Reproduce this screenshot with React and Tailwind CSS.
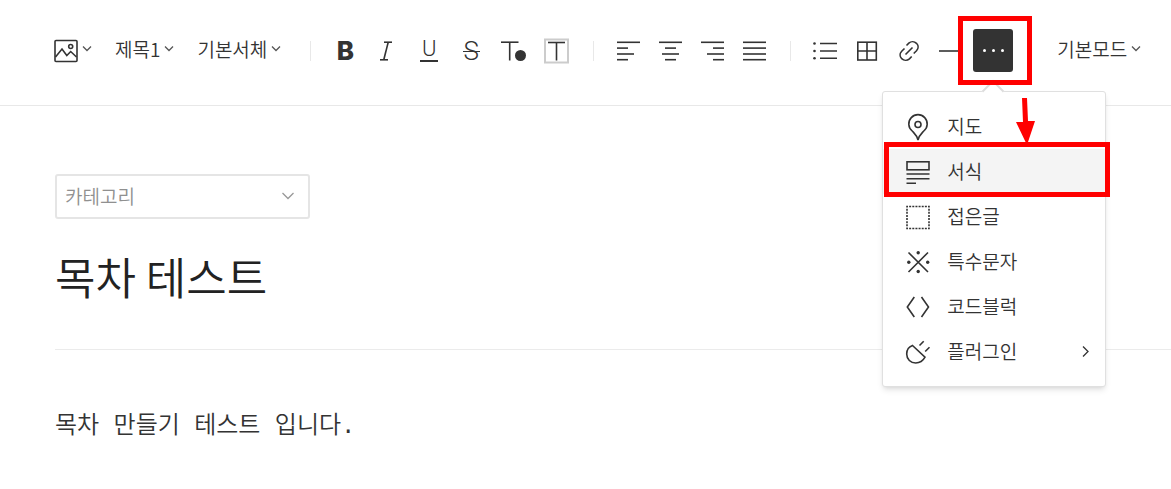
import { useState } from "react";

const strokeProps = {
  fill: "none",
  stroke: "#333",
  strokeWidth: 1.6,
};

function Icon({ children }) {
  return (
    <svg className="w-7 h-7 shrink-0" viewBox="0 0 28 28" aria-hidden="true" {...strokeProps}>
      {children}
    </svg>
  );
}

function Chevron() {
  return (
    <svg className="w-[10px] h-[6px] shrink-0 mb-1" viewBox="0 0 10 6" fill="none" stroke="#555" strokeWidth="1.3" aria-hidden="true">
      <path d="M1 .5l4 4 4-4" />
    </svg>
  );
}

function ToolButton({ label, children }) {
  return (
    <button aria-label={label} className="w-10 h-[43px] mx-px flex items-center justify-center text-[#333]">
      {children}
    </button>
  );
}

function TextDropdown({ children }) {
  return (
    <button className="h-[43px] flex items-center gap-1 text-[19px] whitespace-nowrap text-[#333]">
      <span className="pb-[2px]">{children}</span>
      <Chevron />
    </button>
  );
}

function Divider() {
  return <span className="w-px h-5 bg-[#e8e8e8] shrink-0" />;
}

// 정렬 아이콘: 각 줄의 [x1, x2]
const aligns = [
  { label: "왼쪽 정렬", rows: [[2, 25], [2, 13], [2, 19], [2, 13]] },
  { label: "가운데 정렬", rows: [[2, 25], [8, 19], [5, 22], [8, 19]] },
  { label: "오른쪽 정렬", rows: [[2, 25], [14, 25], [8, 25], [14, 25]] },
  { label: "양쪽 정렬", rows: [[2, 25], [2, 25], [2, 25], [2, 25]] },
];
const alignY = [5.3, 11.1, 17, 22.7];

const menuItems = [
  {
    name: "지도",
    icon: (
      <>
        <path d="M14 27c-1-4.500-3.200-6.200-5.800-9A9.200 9.200 0 1 1 19.800 18c-2.600 2.800-4.800 4.500-5.800 9z" />
        <circle cx="14" cy="11.500" r="3" />
      </>
    ),
  },
  {
    name: "서식",
    icon: (
      <>
        <rect x="3" y="3.800" width="22" height="8" />
        <path d="M2.500 16h23M2.500 20.700h23M2.500 25.200h9.500" />
      </>
    ),
  },
  {
    name: "접은글",
    icon: <rect x="3" y="3.500" width="22" height="22" strokeDasharray="2 1.143" strokeDashoffset="1" />,
  },
  {
    name: "특수문자",
    icon: (
      <>
        <path d="M4.500 4.500L24 24M24 4.500L4.500 24" />
        <g fill="#333" stroke="none">
          <circle cx="14.200" cy="4.800" r="1.700" />
          <circle cx="14.200" cy="23.500" r="1.700" />
          <circle cx="4.800" cy="14.200" r="1.700" />
          <circle cx="23.700" cy="14.200" r="1.700" />
        </g>
      </>
    ),
  },
  {
    name: "코드블럭",
    icon: <path d="M10.300 4L3.300 14l7 10M17.500 4l7 10-7 10" />,
  },
  {
    name: "플러그인",
    more: true,
    icon: (
      <>
        <path d="M8.500 7.500L21 19.200c-2.200 4-5.500 5.800-9.300 5.800-5 0-9-3.800-9-9 0-3.700 2.300-7.300 5.800-8.500z" />
        <path d="M15.500 7.500l4.200-4.200M21.200 13.500l4.300-4.300" />
      </>
    ),
  },
];

function MoreMenu() {
  return (
    <div className="absolute z-10 top-[62px] -left-[91px] w-[224px] bg-white border border-[#e0e0e0] rounded-[3px] shadow-md py-3">
      {/* 말풍선 꼬리 */}
      <span className="absolute -top-[9px] left-[102px] w-4 h-4 bg-white border-t-2 border-l-2 border-[#ddd] rotate-45" />
      <ul>
        {menuItems.map((item) => (
          <li key={item.name} className="relative">
            <button
              className={`w-full h-[45px] pl-[21px] pr-4 flex items-center gap-[15px] text-[19px] text-[#333] ${
                item.name === "서식" ? "bg-[#f4f4f4]" : "bg-white"
              }`}
            >
              <Icon>{item.icon}</Icon>
              <span>{item.name}</span>
              {item.more && (
                <svg className="ml-auto w-[7px] h-3" viewBox="0 0 7 12" {...strokeProps} strokeWidth="1.3" aria-hidden="true">
                  <path d="M1 .5l5 5-5 5" />
                </svg>
              )}
            </button>
            {item.name === "서식" && (
              <span className="absolute z-10 -top-[7px] -bottom-[3px] left-px -right-[5px] border-5 border-[#f00] pointer-events-none" />
            )}
          </li>
        ))}
      </ul>
      {/* 빨간 화살표 */}
      <svg className="absolute top-[6px] left-[133px] w-5 h-12" viewBox="0 0 20 48" fill="#f00" aria-hidden="true">
        <path d="M6 0h5l1 23h7L11 47 0 24h7z" />
      </svg>
    </div>
  );
}

export default function App() {
  const [category, setCategory] = useState("");
  const [title, setTitle] = useState("목차 테스트");
  const [content, setContent] = useState("목차 만들기 테스트 입니다.");

  return (
    <div className="bg-white text-[#222] font-['Noto_Sans_CJK_KR',sans-serif] font-[350]">
      {/* TOOLBAR */}
      <header className="flex items-center pt-[29px] pb-[33px] pl-[54px] border-b border-[#e8e8e8]">
        <div className="flex items-center gap-[23px]">
          <button aria-label="사진" className="h-[43px] flex items-center gap-1">
            <svg className="w-6 h-6" viewBox="0 0 24 24" {...strokeProps} aria-hidden="true">
              <rect x="1" y="1.500" width="22" height="21" rx="1" />
              <circle cx="16.700" cy="7.500" r="2" />
              <path d="M1.500 18L8 10l4.800 6.500 3.900-4L22.500 18" />
            </svg>
            <Chevron />
          </button>
          <TextDropdown>제목1</TextDropdown>
          <TextDropdown>기본서체</TextDropdown>
        </div>

        <div className="flex items-center ml-[29px]">
          <Divider />
        </div>

        <div className="flex ml-[13px] mr-[17px]">
          <ToolButton label="굵게">
            <span className="font-['Inter'] font-extrabold text-[26px] leading-none">B</span>
          </ToolButton>
          <ToolButton label="기울임">
            <Icon>
              <line x1="11" y1="5.200" x2="19" y2="5.200" />
              <line x1="7" y1="22.800" x2="15" y2="22.800" />
              <line x1="15.200" y1="5.200" x2="10.800" y2="22.800" />
            </Icon>
          </ToolButton>
          <ToolButton label="밑줄">
            <span className="w-[18px] h-[22px] border-b-2 border-[#333] font-['Roboto'] font-light text-[22px] leading-[18px] text-center">U</span>
          </ToolButton>
          <ToolButton label="취소선">
            <span className="relative font-['Roboto'] font-light text-[26px] leading-none">
              S
              <span className="absolute top-1/2 -inset-x-px h-px bg-[#333]" />
            </span>
          </ToolButton>
          <ToolButton label="글자색">
            <Icon>
              <line x1="2" y1="5.200" x2="19.500" y2="5.200" />
              <line x1="10.700" y1="5" x2="10.700" y2="23.500" />
              <circle cx="21.500" cy="18.500" r="5.500" fill="#333" stroke="none" />
            </Icon>
          </ToolButton>
          <ToolButton label="배경색">
            <Icon>
              <rect x="4" y="2.500" width="23" height="23" stroke="#ccc" strokeWidth="2" />
              <line x1="7" y1="5.500" x2="24" y2="5.500" />
              <line x1="15.500" y1="5" x2="15.500" y2="23.500" />
            </Icon>
          </ToolButton>
        </div>

        <Divider />

        <div className="flex mx-[14px]">
          {aligns.map((a) => (
            <ToolButton key={a.label} label={a.label}>
              <Icon>
                {a.rows.map(([x1, x2], i) => (
                  <line key={i} x1={x1} x2={x2} y1={alignY[i]} y2={alignY[i]} />
                ))}
              </Icon>
            </ToolButton>
          ))}
        </div>

        <Divider />

        <div className="flex ml-[13px]">
          <ToolButton label="목록">
            <Icon>
              <path d="M9 6.500h17M9 14h17M9 21.300h17" />
              <g fill="#333" stroke="none">
                <circle cx="3.500" cy="6.500" r="1.300" />
                <circle cx="3.500" cy="14" r="1.300" />
                <circle cx="3.500" cy="21.300" r="1.300" />
              </g>
            </Icon>
          </ToolButton>
          <ToolButton label="표">
            <Icon>
              <rect x="4.800" y="5.200" width="18.500" height="17.800" />
              <path d="M14 5v18M5 14h18" />
            </Icon>
          </ToolButton>
          <ToolButton label="링크">
            <Icon>
              <path d="M10.500 17.500l7-7" />
              <path d="M11.500 8.500l2.300-2.300c2.200-2 5.500-2 7.700.1 2.100 2.200 2.100 5.300 0 7.500l-2.800 2.700" />
              <path d="M9.500 11.500l-2.800 2.700c-2.100 2.200-2.100 5.300 0 7.500 2.200 2.100 5.500 2.100 7.700.1l2.300-2.300" />
            </Icon>
          </ToolButton>
          <ToolButton label="구분선">
            <Icon>
              <path d="M2 14h24" />
            </Icon>
          </ToolButton>
          <div className="relative mx-px">
            <button aria-label="더보기" aria-expanded="true" className="w-10 h-[43px] rounded-[3px] bg-[#333] flex items-center justify-center gap-[6px]">
              <span className="w-[3px] h-[3px] rounded-full bg-white" />
              <span className="w-[3px] h-[3px] rounded-full bg-white" />
              <span className="w-[3px] h-[3px] rounded-full bg-white" />
            </button>
            <MoreMenu />
            <span className="absolute z-20 -top-[13px] -left-[15px] w-[74px] h-[69px] border-5 border-[#f00] pointer-events-none" />
          </div>
        </div>

        <div className="ml-[43px]">
          <TextDropdown>기본모드</TextDropdown>
        </div>
      </header>

      {/* EDITOR */}
      <main className="pl-[55px] pt-[68px]">
        <div className="relative w-[255px]">
          <select
            aria-label="카테고리"
            value={category}
            onChange={(e) => setCategory(e.target.value)}
            className="block w-full h-[45px] pl-2 appearance-none border-2 border-[#e5e5e5] rounded-[3px] text-[19px] text-[#909090] bg-white"
          >
            <option value="">카테고리</option>
          </select>
          <svg className="absolute right-4 top-[18px] w-3 h-2 pointer-events-none" viewBox="0 0 12 8" fill="none" stroke="#999" strokeWidth="1.300" aria-hidden="true">
            <path d="M.5 1L6 6.500 11.500 1" />
          </svg>
        </div>

        <div className="pt-6 pb-10 border-b border-[#ebebeb]">
          <input
            aria-label="제목"
            value={title}
            onChange={(e) => setTitle(e.target.value)}
            className="block w-full h-[66px] text-[44px] text-[#222] outline-none"
          />
        </div>

        <textarea
          aria-label="내용"
          value={content}
          onChange={(e) => setContent(e.target.value)}
          rows={2}
          className="block w-full mt-[57px] resize-none outline-none font-['Liberation_Mono','Noto_Sans_CJK_KR',monospace] text-[24px] leading-10 text-[#333]"
        />
      </main>
    </div>
  );
}
